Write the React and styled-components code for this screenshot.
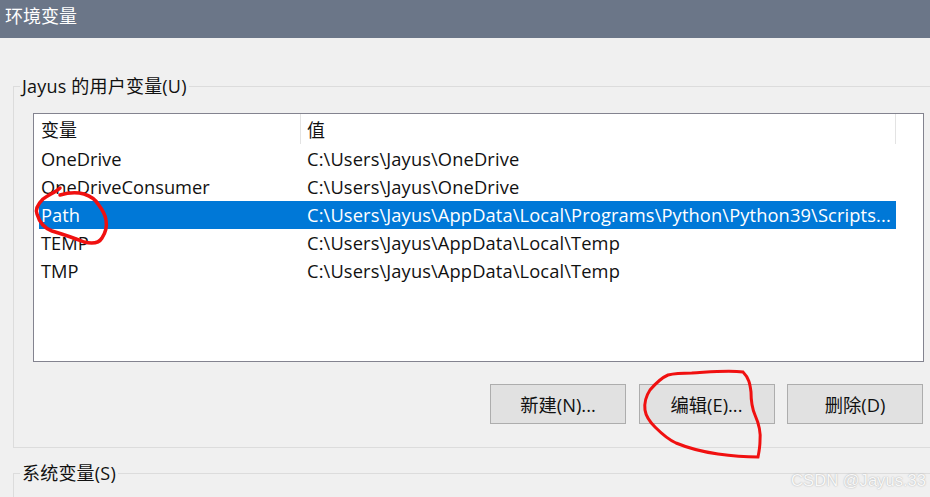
import React from "react";
import styled, { createGlobalStyle } from "styled-components";

const GlobalStyle = createGlobalStyle`
  html, body {
    margin: 0;
    padding: 0;
    background: #f0f0f0;
  }
  body {
    font-family: "Open Sans", "Noto Sans CJK SC", sans-serif;
    color: #111;
  }
`;

const Page = styled.div`
  position: relative;
  width: 930px;
  height: 497px;
  overflow: hidden;
  background: #f0f0f0;
`;

const TitleBar = styled.div`
  height: 38px;
  background: #6b7688;
  color: #fff;
  font-size: 18px;
  line-height: 32px;
  padding-left: 5px;
`;

const Group = styled.fieldset`
  margin: ${(p) => p.$top}px -10px 0 13px;
  padding: 0 0 0 19px;
  border: 1px solid #dcdcdc;
  height: ${(p) => p.$height}px;
  box-sizing: border-box;
`;

const GroupTitle = styled.legend`
  margin-left: -13px;
  padding: 0 2px;
  font-size: 18px;
  line-height: 24px;
  height: 24px;
  letter-spacing: 0.2px;
`;

const ListBox = styled.div`
  width: 891px;
  height: 249px;
  box-sizing: border-box;
  margin-top: 15px;
  background: #fff;
  border: 1px solid #83838f;
  padding: 0 0 0 5px;
`;

const HeaderRow = styled.div`
  display: grid;
  grid-template-columns: 262px 595px;
  width: 857px;
  height: 31px;
  font-size: 18px;
  line-height: 33px;
`;

const HeaderCell = styled.div`
  padding-left: ${(p) => p.$pad}px;
  border-right: 1px solid #e3e3e3;
  height: 30px;
`;

const Row = styled.div`
  display: grid;
  grid-template-columns: 262px 595px;
  width: 857px;
  height: 28px;
  font-size: 18.3px;
  line-height: 28px;
  background: ${(p) => (p.$selected ? "#0078d7" : "transparent")};
  color: ${(p) => (p.$selected ? "#fff" : "#111")};
`;

const NameCell = styled.div`
  padding-left: 2px;
  white-space: nowrap;
  overflow: hidden;
`;

const ValueCell = styled.div`
  padding-left: 6px;
  white-space: nowrap;
  overflow: hidden;
  letter-spacing: 0.12px;
`;

const Buttons = styled.div`
  display: flex;
  justify-content: flex-end;
  gap: 12.5px;
  width: 890px;
  margin-top: 22px;
`;

const Button = styled.button`
  width: 136px;
  height: 40px;
  box-sizing: border-box;
  background: #e1e1e1;
  border: 1px solid #adadad;
  font-family: inherit;
  font-size: 18.3px;
  color: #111;
  padding: 0;
`;

const Scribbles = styled.svg`
  position: absolute;
  left: 0;
  top: 0;
  pointer-events: none;
`;

const Watermark = styled.div`
  position: absolute;
  right: 4px;
  bottom: 6px;
  font-family: "Liberation Sans", sans-serif;
  font-size: 16.6px;
  line-height: 20px;
  color: #f8f8f8;
  text-shadow: 0 0 1.5px #a0a0a0;
`;

const rows = [
  { name: "OneDrive", value: "C:\\Users\\Jayus\\OneDrive" },
  { name: "OneDriveConsumer", value: "C:\\Users\\Jayus\\OneDrive" },
  {
    name: "Path",
    value: "C:\\Users\\Jayus\\AppData\\Local\\Programs\\Python\\Python39\\Scripts...",
    selected: true,
  },
  { name: "TEMP", value: "C:\\Users\\Jayus\\AppData\\Local\\Temp" },
  { name: "TMP", value: "C:\\Users\\Jayus\\AppData\\Local\\Temp" },
];

const App = () => {
  return (
    <Page>
      <GlobalStyle />
      <TitleBar>环境变量</TitleBar>
      <Group $top={36} $height={374}>
        <GroupTitle>Jayus 的用户变量(U)</GroupTitle>
        <ListBox>
          <HeaderRow>
            <HeaderCell $pad={2}>变量</HeaderCell>
            <HeaderCell $pad={6}>值</HeaderCell>
          </HeaderRow>
          {rows.map((row) => (
            <Row key={row.name} $selected={row.selected}>
              <NameCell>{row.name}</NameCell>
              <ValueCell>{row.value}</ValueCell>
            </Row>
          ))}
        </ListBox>
        <Buttons>
          <Button>新建(N)...</Button>
          <Button>编辑(E)...</Button>
          <Button>删除(D)</Button>
        </Buttons>
      </Group>
      <Group $top={13} $height={60}>
        <GroupTitle>系统变量(S)</GroupTitle>
      </Group>
      <Scribbles width="930" height="497" viewBox="0 0 930 497" fill="none">
        <path
          d="M60 188 C56 192 48 195 43 199 C38 204 35 209 37 214 C39 221 44 228 52 231 C62 234 74 238 84 242 C92 244 99 243 102 238 C106 232 107 226 106 220 C105 213 101 208 98 204 C95 199 90 196 84 194 C76 192 67 193 60 195"
          stroke="#f01010"
          strokeWidth="3.5"
          strokeLinecap="round"
        />
        <path
          d="M692 373 C710 372 728 370 743 372 C749 378 750 384 751 392 C751 400 752 408 755 415 C759 424 761 432 760 441 C760 447 759 452 758 457 C745 457 732 456 718 454 C704 452 688 448 676 443 C667 439 660 432 655 427 C650 422 646 417 645 410 C644 402 646 396 650 390 C656 383 661 378 668 375 C676 373 684 373 692 373"
          stroke="#f01010"
          strokeWidth="3"
          strokeLinecap="round"
        />
      </Scribbles>
      <Watermark>CSDN @Jayus.33</Watermark>
    </Page>
  );
};

export default App;
